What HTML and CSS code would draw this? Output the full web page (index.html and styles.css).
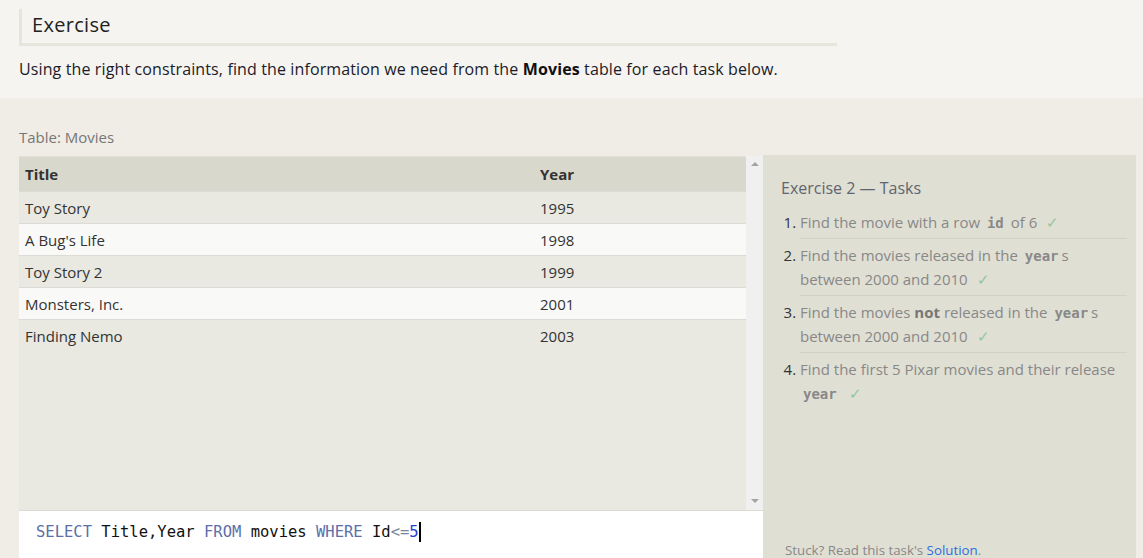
FILE: index.html
```html
<!DOCTYPE html>
<html>
<head>
<meta charset="utf-8">
<link rel="stylesheet" href="styles.css">
</head>
<body>
<section class="intro">
  <h2 class="heading">Exercise</h2>
  <p class="lead">Using the right constraints, find the information we need from the <strong>Movies</strong> table for each task below.</p>
</section>
<section class="workspace">
  <div class="caption">Table: Movies</div>
  <div class="panes">
    <div class="left">
      <div class="tablebox">
        <div class="tablescroll">
          <table class="movies">
            <thead><tr><th class="c-title">Title</th><th>Year</th></tr></thead>
            <tbody>
              <tr><td>Toy Story</td><td>1995</td></tr>
              <tr><td>A Bug's Life</td><td>1998</td></tr>
              <tr><td>Toy Story 2</td><td>1999</td></tr>
              <tr><td>Monsters, Inc.</td><td>2001</td></tr>
              <tr><td>Finding Nemo</td><td>2003</td></tr>
            </tbody>
          </table>
        </div>
        <div class="scrollbar">
          <span class="arrow up"></span>
          <span class="arrow down"></span>
        </div>
      </div>
      <div class="editor"><span class="kw">SELECT</span> Title,Year <span class="kw">FROM</span> movies <span class="kw">WHERE</span> Id<span class="op">&lt;=</span><span class="num">5</span><span class="cursor"></span></div>
    </div>
    <aside class="tasks">
      <h3 class="tasks-title">Exercise 2 — Tasks</h3>
      <ol class="task-list">
        <li><span class="t">Find the movie with a row <code>id</code> of 6 <span class="check">✓</span></span></li>
        <li><span class="t">Find the movies released in the <code>year</code>s between 2000 and 2010 <span class="check">✓</span></span></li>
        <li><span class="t">Find the movies <b>not</b> released in the <code>year</code>s between 2000 and 2010 <span class="check">✓</span></span></li>
        <li><span class="t">Find the first 5 Pixar movies and their release <code>year</code> <span class="check">✓</span></span></li>
      </ol>
      <div class="stuck">Stuck? Read this task's <a href="#">Solution</a>.</div>
    </aside>
  </div>
</section>
</body>
</html>
```

FILE: styles.css
```css
html, body {
  margin: 0;
  padding: 0;
}
body {
  font-family: "Open Sans", "Noto Sans", sans-serif;
  background: #efede6;
  color: #222;
  height: 558px;
  overflow: hidden;
}
.intro {
  background: #f5f4f0;
  padding: 9px 19px 0 19px;
  height: 89px;
}
.heading {
  margin: 0;
  width: 805px;
  height: 34px;
  border-left: 3px solid #e6e5db;
  border-bottom: 3px solid #e6e5db;
  padding-left: 10px;
  font-size: 20px;
  font-weight: 400;
  line-height: 32px;
  color: #222;
  letter-spacing: 0.3px;
}
.lead {
  margin: 12px 0 0 0;
  font-size: 16px;
  line-height: 22px;
  color: #1b1b2a;
  letter-spacing: 0.12px;
}
.lead strong {
  font-weight: 700;
  color: #111;
}
.workspace {
  padding: 0 7px 0 19px;
}
.caption {
  padding-top: 29px;
  height: 29px;
  font-size: 15px;
  line-height: 20px;
  color: #777;
}
.panes {
  display: flex;
  height: 402px;
}
.left {
  width: 744px;
  display: flex;
  flex-direction: column;
}
.tablebox {
  flex: 1;
  display: flex;
  background: #e9e8e1;
  border-top: 1px solid #e2e1d8;
  border-bottom: 1px solid #dcdbd3;
}
.tablescroll {
  flex: 1;
}
.movies {
  width: 100%;
  border-collapse: collapse;
  font-size: 15px;
  color: #333;
}
.movies th {
  background: #d9d8cc;
  text-align: left;
  font-weight: 700;
  height: 34px;
  padding: 0 6px;
  color: #333;
  font-size: 15px;
}
.movies th.c-title {
  width: 503px;
}
.movies td {
  height: 31px;
  padding: 0 6px;
  border-top: 1px solid #dcdbd5;
  color: #333;
}
.movies tbody tr:nth-child(odd) td {
  background: #e9e8e1;
}
.movies tbody tr:nth-child(even) td {
  background: #f9f9f8;
}
.scrollbar {
  width: 17px;
  background: #f0f0f0;
  position: relative;
  margin-top: -1px;
}
.arrow {
  position: absolute;
  left: 5px;
  width: 0;
  height: 0;
  border-left: 4px solid transparent;
  border-right: 4px solid transparent;
}
.arrow.up {
  top: 6px;
  border-bottom: 4px solid #a3a3a3;
}
.arrow.down {
  bottom: 7px;
  border-top: 4px solid #a3a3a3;
}
.editor {
  height: 47px;
  background: #fff;
  font-family: "DejaVu Sans Mono", "Liberation Mono", monospace;
  font-size: 15.5px;
  line-height: 22px;
  padding: 0 0 6px 17px;
  box-sizing: border-box;
  color: #111;
  white-space: pre;
  display: flex;
  align-items: center;
}
.kw {
  color: #5c6fa8;
}
.op {
  color: #778899;
}
.num {
  color: #2a3fd0;
}
.cursor {
  display: inline-block;
  width: 2px;
  height: 20px;
  background: #000;
}
.tasks {
  width: 373px;
  background: #e0dfd4;
  padding: 21px 9px 0 18px;
  box-sizing: border-box;
  position: relative;
  margin-top: -1px;
  height: 403px;
}
.tasks-title {
  margin: 0;
  font-size: 16px;
  font-weight: 400;
  color: #5f6570;
  line-height: 24px;
}
.task-list {
  margin: 10px 0 0 0;
  padding: 0 0 0 19px;
  font-size: 15px;
  line-height: 24px;
  color: #333;
}
.task-list li {
  padding: 0 0 4px 0;
  margin-bottom: 4px;
  border-bottom: 1px solid #d3d2c7;
}
.task-list li:last-child {
  border-bottom: none;
}
.task-list .t {
  color: #888;
}
.task-list code {
  font-family: "DejaVu Sans Mono", "Liberation Mono", monospace;
  font-weight: 700;
  font-size: 14px;
  line-height: 1;
  color: #888;
  padding: 0 3px;
}
.task-list b {
  color: #777;
}
.check {
  color: #90c69a;
  margin-left: 5px;
}
.stuck {
  position: absolute;
  left: 22px;
  bottom: -2px;
  font-size: 13.3px;
  color: #888;
  line-height: 20px;
}
.stuck a {
  color: #2a6fe0;
  text-decoration: none;
}
```
